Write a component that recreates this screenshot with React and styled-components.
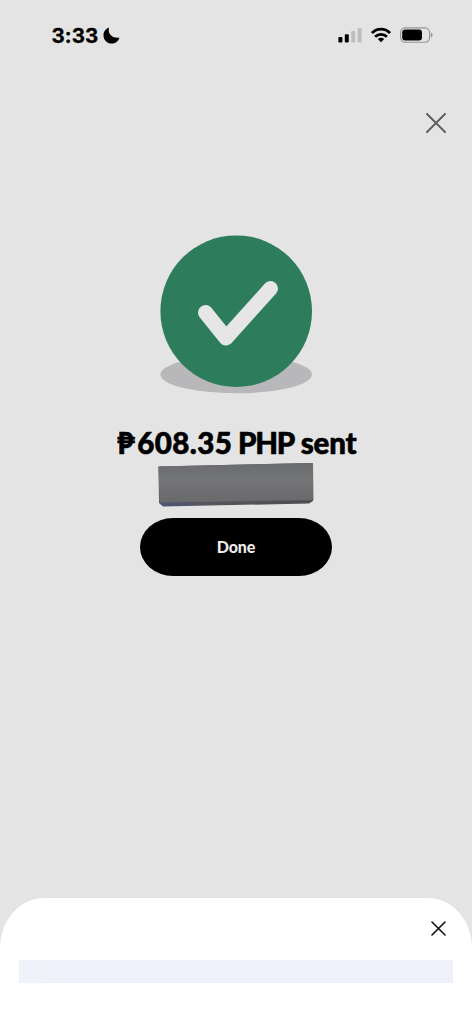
import styled, { createGlobalStyle } from "styled-components";

const GlobalStyle = createGlobalStyle`
  * {
    box-sizing: border-box;
  }
  body {
    margin: 0;
    background-color: #e4e4e4;
  }
`;
const Screen = styled.div`
  display: flex;
  flex-direction: column;
  width: 100%;
  height: 1024px;
  overflow: hidden;
  background-color: #e4e4e4;
  font-family: "Lato", "Inter", sans-serif;
`;
const StatusBar = styled.header`
  display: flex;
  justify-content: space-between;
  height: 70px;
  padding: 24px 39px 0 51px;
`;
const StatusGroup = styled.div`
  display: flex;
  align-items: center;
  height: 22px;
  gap: ${(props) => props.$gap || 0}px;
`;
const Time = styled.span`
  width: 48px;
  padding: 1px 0 0 0.5px;
  font-family: "Inter", sans-serif;
  font-size: 20.5px;
  font-weight: 700;
  line-height: 22px;
  letter-spacing: 0.1px;
  white-space: nowrap;
  -webkit-text-stroke: 0.3px #000;
`;
const Icon = styled.svg`
  display: block;
  flex: none;
`;
const Toolbar = styled.div`
  display: flex;
  justify-content: flex-end;
  height: 165px;
  padding: 43.4px 26px 0 0;
`;
const CloseButton = styled.button`
  display: block;
  height: ${(props) => props.$size}px;
  padding: 0;
  border: none;
  background: none;
  color: ${(props) => props.$color};
`;
const Main = styled.main`
  display: flex;
  flex: 1;
  flex-direction: column;
  align-items: center;
`;
const Title = styled.h1`
  height: 36px;
  margin: 30px 0 0 2px;
  font-size: 29.5px;
  font-weight: 900;
  line-height: 36px;
  letter-spacing: -0.2px;
  white-space: nowrap;
  -webkit-text-stroke: 0.6px #000;
`;
const Sign = styled.span`
  letter-spacing: 2.6px;
`;
const Amount = styled.span`
  letter-spacing: 0.4px;
`;
const Currency = styled.span`
  margin-left: -1px;
  letter-spacing: -1.3px;
`;
const DoneButton = styled.button`
  width: 192px;
  height: 57.5px;
  margin-top: 9px;
  padding: 0;
  border: none;
  border-radius: 33px / 29px;
  background-color: #000;
  color: #ececec;
  font-family: inherit;
  font-size: 16px;
  font-weight: 900;
  letter-spacing: -0.1px;
`;
const Sheet = styled.section`
  display: flex;
  flex-direction: column;
  height: 126px;
  padding: 23px 19px 0;
  border-radius: 44px 44px 0 0 / 50px 50px 0 0;
  background-color: #fff;
`;
const SheetHeader = styled.div`
  display: flex;
  justify-content: flex-end;
  height: 39px;
  padding-right: 7px;
`;
const Placeholder = styled.div`
  height: 23px;
  background: linear-gradient(to right, #f1f3fa, #eef0fa 60px);
`;

const Close = ({ size, color, width, label }) => (
  <CloseButton $size={size} $color={color} aria-label={label}>
    <Icon width={size} height={size} viewBox={`0 0 ${size} ${size}`}>
      <path
        d={`M1 1L${size - 1} ${size - 1}M${size - 1} 1L1 ${size - 1}`}
        stroke="currentColor"
        strokeWidth={width}
        strokeLinecap="round"
      />
    </Icon>
  </CloseButton>
);

const Moon = () => (
  <Icon width="17" height="17" viewBox="0 0 17 17">
    <path d="M6.1.5C4.3 5.8 8.4 11.7 16.5 10.7C15.2 14.5 12.2 16.6 8.7 16.6C4.2 16.6.5 13.1.5 8.5C.5 4.7 2.8 1.6 6.1.5Z" />
  </Icon>
);

const Signal = () => (
  <Icon width="24" height="16" viewBox="0 0 24 16">
    <rect x=".4" y="10" width="4" height="5.4" rx="1" />
    <rect x="6.8" y="7.3" width="4" height="8.1" rx="1" />
    <rect x="13.2" y="4.1" width="4" height="11.3" rx="1" fill="#bebebe" />
    <rect x="19.6" y=".9" width="4" height="14.5" rx="1" fill="#bebebe" />
  </Icon>
);

const Wifi = () => (
  <Icon width="20" height="16" viewBox="0 0 20 16">
    <g fill="none" stroke="#000" strokeWidth="2.8">
      <path d="M1 6.1C6 .9 14 .9 19 6.1" />
      <path d="M4.1 9.7C7.4 6.5 12.6 6.5 15.9 9.7" />
    </g>
    <path d="M6.8 12C8.6 10.4 11.4 10.4 13.2 12L10 15.2Z" />
  </Icon>
);

const Battery = () => (
  <Icon width="33" height="16" viewBox="0 0 33 16">
    <rect x=".6" y=".9" width="29" height="14.3" rx="4.6" fill="none" stroke="#929292" strokeWidth="1.1" />
    <rect x="2.2" y="2.6" width="19.8" height="10.9" rx="3" />
    <path d="M31 5.5C33 6.4 33 9.4 31 10.4Z" fill="#929292" />
  </Icon>
);

const SuccessMark = () => (
  <Icon width="154" height="160" viewBox="159 235 154 160">
    <ellipse cx="236.2" cy="374.5" rx="75.7" ry="18.8" fill="#b8b8ba" />
    <circle cx="236.2" cy="311.2" r="75.8" fill="#2d7d5d" />
    <path
      d="M205.5 312.5L226 338L270.5 288.5"
      fill="none"
      stroke="#e6e6e6"
      strokeWidth="15"
      strokeLinecap="round"
      strokeLinejoin="round"
    />
  </Icon>
);

// Painted-over recipient name
const Redaction = () => (
  <Icon width="158" height="48" viewBox="157 461 158 48">
    <defs>
      <linearGradient id="cover" x1="0" y1="0" x2="0" y2="1">
        <stop offset="0" stopColor="#6b6c6e" />
        <stop offset=".45" stopColor="#747577" />
        <stop offset="1" stopColor="#69696b" />
      </linearGradient>
      <linearGradient id="edge">
        <stop offset="0" stopColor="#4e5578" />
        <stop offset=".3" stopColor="#55565e" />
        <stop offset="1" stopColor="#4e4e50" />
      </linearGradient>
    </defs>
    <path d="M158.5 466.5L313 463V501L309 503.5L163 506.5L159 503Z" fill="url(#edge)" />
    <path d="M158.5 466.5L313 463L313.5 500L159.5 502.5Z" fill="url(#cover)" />
  </Icon>
);

const App = () => {
  return (
    <>
      <GlobalStyle />
      <Screen>
        <StatusBar>
          <StatusGroup $gap={4}>
            <Time>3:33</Time>
            <Moon />
          </StatusGroup>
          <StatusGroup $gap={9}>
            <Signal />
            <Wifi />
            <Battery />
          </StatusGroup>
        </StatusBar>
        <Toolbar>
          <Close size={20} color="#5e5e5e" width={1.9} label="Close" />
        </Toolbar>
        <Main>
          <SuccessMark />
          <Title>
            <Sign>₱</Sign>
            <Amount>608.35</Amount> <Currency>PHP</Currency> sent
          </Title>
          <Redaction />
          <DoneButton>Done</DoneButton>
        </Main>
        <Sheet>
          <SheetHeader>
            <Close size={15} color="#111" width={1.6} label="Dismiss" />
          </SheetHeader>
          <Placeholder />
        </Sheet>
      </Screen>
    </>
  );
};

export default App;
